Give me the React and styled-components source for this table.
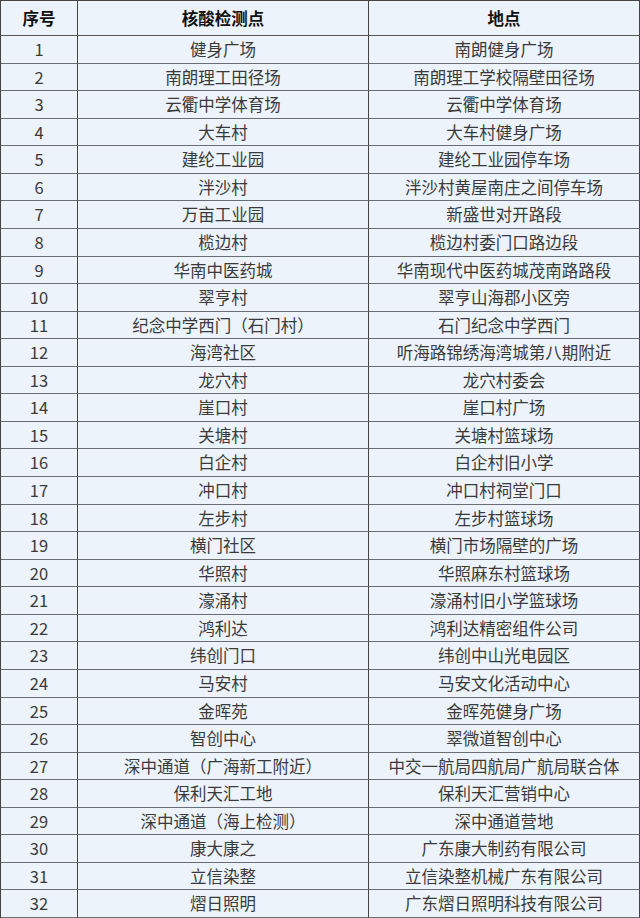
import styled, { createGlobalStyle } from "styled-components";

const GlobalStyle = createGlobalStyle`
    html, body {
        margin: 0;
        padding: 0;
        background: #ffffff;
    }
    body {
        font-family: "Noto Sans CJK SC", "Noto Sans", sans-serif;
    }
`;

// rows of the table: [test point, address]
const rows = [
    ["健身广场", "南朗健身广场"],
    ["南朗理工田径场", "南朗理工学校隔壁田径场"],
    ["云衢中学体育场", "云衢中学体育场"],
    ["大车村", "大车村健身广场"],
    ["建纶工业园", "建纶工业园停车场"],
    ["泮沙村", "泮沙村黄屋南庄之间停车场"],
    ["万亩工业园", "新盛世对开路段"],
    ["榄边村", "榄边村委门口路边段"],
    ["华南中医药城", "华南现代中医药城茂南路路段"],
    ["翠亨村", "翠亨山海郡小区旁"],
    ["纪念中学西门（石门村）", "石门纪念中学西门"],
    ["海湾社区", "听海路锦绣海湾城第八期附近"],
    ["龙穴村", "龙穴村委会"],
    ["崖口村", "崖口村广场"],
    ["关塘村", "关塘村篮球场"],
    ["白企村", "白企村旧小学"],
    ["冲口村", "冲口村祠堂门口"],
    ["左步村", "左步村篮球场"],
    ["横门社区", "横门市场隔壁的广场"],
    ["华照村", "华照麻东村篮球场"],
    ["濠涌村", "濠涌村旧小学篮球场"],
    ["鸿利达", "鸿利达精密组件公司"],
    ["纬创门口", "纬创中山光电园区"],
    ["马安村", "马安文化活动中心"],
    ["金晖苑", "金晖苑健身广场"],
    ["智创中心", "翠微道智创中心"],
    ["深中通道（广海新工附近）", "中交一航局四航局广航局联合体"],
    ["保利天汇工地", "保利天汇营销中心"],
    ["深中通道（海上检测）", "深中通道营地"],
    ["康大康之", "广东康大制药有限公司"],
    ["立信染整", "立信染整机械广东有限公司"],
    ["熠日照明", "广东熠日照明科技有限公司"],
];

const Table = styled.div`
    display: grid;
    grid-template-columns: 77px 291px 271px;
    grid-template-rows: 35px repeat(32, 27.5625px);
    width: 640px;
    box-sizing: border-box;
    border-top: 1px solid #444;
    border-left: 1px solid #444;
    background-color: #edf3fa;
`;

const Cell = styled.div`
    display: flex;
    align-items: center;
    justify-content: center;
    box-sizing: border-box;
    border-right: 1px solid #444;
    border-bottom: 1px solid ${props => props.head ? '#555' : '#6a6e74'};
    font-size: 16.5px;
    line-height: 1;
    white-space: nowrap;
    color: ${props => props.head ? '#111' : '#3a3a3a'};
    font-weight: ${props => props.head ? 700 : 400};
    padding-top: ${props => props.head ? '1px' : '0'};
`;

export default function App() {
    return (
        <>
            <GlobalStyle />
            <Table>
                <Cell head>序号</Cell>
                <Cell head>核酸检测点</Cell>
                <Cell head>地点</Cell>
                {rows.map(([point, place], i) => (
                    <>
                        <Cell key={`n${i}`}>{i + 1}</Cell>
                        <Cell key={`p${i}`}>{point}</Cell>
                        <Cell key={`a${i}`}>{place}</Cell>
                    </>
                ))}
            </Table>
        </>
    );
}
